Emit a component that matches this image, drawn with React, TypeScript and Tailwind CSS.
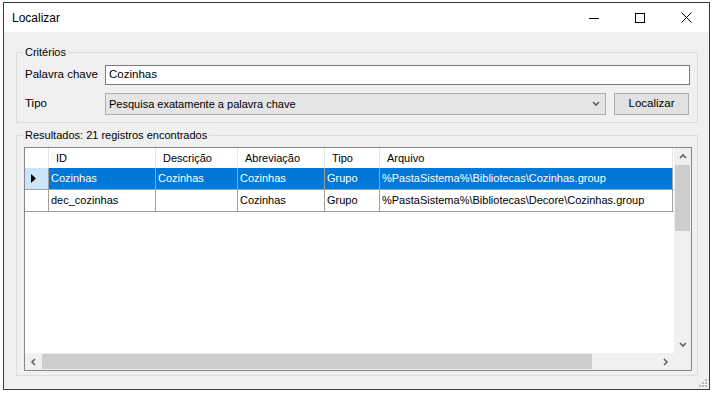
import React from "react";

const font = { fontFamily: '"Liberation Sans", Arial, sans-serif' };

function Chevron({ dir }: { dir: "up" | "down" | "left" | "right" }) {
  const paths: Record<string, string> = {
    up: "M1 5 L4 2 L7 5",
    down: "M1 2 L4 5 L7 2",
    left: "M5 1 L2 4 L5 7",
    right: "M2 1 L5 4 L2 7",
  };
  return (
    <svg width="8" height="8" viewBox="0 0 8 8">
      <path d={paths[dir]} fill="none" stroke="#606060" strokeWidth="1.6" />
    </svg>
  );
}

const cols = [
  { key: "id", label: "ID", w: "w-[107px]" },
  { key: "desc", label: "Descrição", w: "w-[82px]" },
  { key: "abrev", label: "Abreviação", w: "w-[87px]" },
  { key: "tipo", label: "Tipo", w: "w-[55px]" },
  { key: "arq", label: "Arquivo", w: "w-[293px]" },
];

const rows = [
  {
    id: "Cozinhas",
    desc: "Cozinhas",
    abrev: "Cozinhas",
    tipo: "Grupo",
    arq: "%PastaSistema%\\Bibliotecas\\Cozinhas.group",
    sel: true,
  },
  {
    id: "dec_cozinhas",
    desc: "",
    abrev: "Cozinhas",
    tipo: "Grupo",
    arq: "%PastaSistema%\\Bibliotecas\\Decore\\Cozinhas.group",
    sel: false,
  },
];

export default function App() {
  return (
    <div className="w-[714px] h-[394px] bg-white pt-[2px] pl-[3px] text-[11.5px] text-black" style={font}>
      <div className="relative w-[707px] h-[388px] border border-[#3a3a3a] flex flex-col bg-[#f0f0f0]">
        {/* Title bar */}
        <div className="h-[29px] bg-white flex items-center shrink-0">
          <div className="pl-[8px] flex-1 text-[12px] pt-[1px]">Localizar</div>
          <div className="flex h-full">
            <div className="w-[46px] h-full flex items-center justify-center">
              <svg width="10" height="10" viewBox="0 0 10 10">
                <line x1="0" y1="5.5" x2="10" y2="5.5" stroke="#000" strokeWidth="1" />
              </svg>
            </div>
            <div className="w-[46px] h-full flex items-center justify-center">
              <svg width="10" height="10" viewBox="0 0 10 10">
                <rect x="0.5" y="0.5" width="9" height="9" fill="none" stroke="#000" strokeWidth="1" />
              </svg>
            </div>
            <div className="w-[46px] h-full flex items-center justify-center">
              <svg width="11" height="11" viewBox="0 0 11 11">
                <line x1="0.5" y1="0.5" x2="10.5" y2="10.5" stroke="#000" strokeWidth="1" />
                <line x1="10.5" y1="0.5" x2="0.5" y2="10.5" stroke="#000" strokeWidth="1" />
              </svg>
            </div>
          </div>
        </div>

        {/* Client */}
        <div className="flex-1 flex flex-col pl-[12px] pr-[11px] pt-[13px]">
          {/* Critérios */}
          <fieldset className="border border-[#dcdcdc] px-[8px] pt-[5px] pb-[7px] min-w-0">
            <legend className="ml-[-2px] px-[2px] leading-[15px] text-[11px]">Critérios</legend>
            <div className="flex items-center h-[20px]">
              <div className="w-[80px] shrink-0">Palavra chave</div>
              <div className="flex-1 h-[20px] border border-[#7a7a7a] bg-white flex items-center px-[3px] mr-[-1px]">
                Cozinhas
              </div>
            </div>
            <div className="flex items-center h-[22px] mt-[8px]">
              <div className="w-[80px] shrink-0">Tipo</div>
              <div className="flex-1 h-[22px] border border-[#adadad] bg-[#e5e5e5] flex items-center pl-[3px] pr-[5px] text-[11px]">
                <span className="flex-1">Pesquisa exatamente a palavra chave</span>
                <Chevron dir="down" />
              </div>
              <div className="w-[75px] h-[22px] ml-[8px] border border-[#adadad] bg-[#e1e1e1] flex items-center justify-center">
                Localizar
              </div>
            </div>
          </fieldset>

          {/* Resultados */}
          <fieldset className="mt-[5px] border border-[#dcdcdc] pl-[7px] pr-[5px] pt-[4px] pb-[4px] min-w-0">
            <legend className="ml-[-1px] px-[2px] leading-[15px] text-[11px]">Resultados: 21 registros encontrados</legend>
            <div className="h-[224px] border border-[#828790] bg-white flex flex-col text-[11px]">
              <div className="flex flex-1 min-h-0">
                {/* data area */}
                <div className="flex-1 flex flex-col">
                  {/* header */}
                  <div className="flex h-[20px]">
                    <div className="w-[24px] border-r border-[#e5e5e5]" />
                    {cols.map((c) => (
                      <div
                        key={c.key}
                        className={`${c.w} shrink-0 border-r border-[#e5e5e5] flex items-center pl-[7px]`}
                      >
                        {c.label}
                      </div>
                    ))}
                  </div>
                  {rows.map((r, i) => (
                    <div key={i} className="flex h-[22px] border-b border-[#a0a0a0]">
                      <div
                        className={`w-[24px] shrink-0 border-r border-[#a0a0a0] flex items-center pl-[6px] ${
                          r.sel ? "bg-[#cce4f7]" : "bg-white"
                        }`}
                      >
                        {r.sel && (
                          <svg width="5" height="9" viewBox="0 0 5 9">
                            <path d="M0 0 L5 4.5 L0 9 Z" fill="#000" />
                          </svg>
                        )}
                      </div>
                      {cols.map((c) => (
                        <div
                          key={c.key}
                          className={`${c.w} shrink-0 border-r border-[#a0a0a0] flex items-center pl-[2px] whitespace-nowrap overflow-hidden ${
                            r.sel ? "bg-[#0078d7] text-white" : "bg-white text-black"
                          }`}
                        >
                          {(r as any)[c.key]}
                        </div>
                      ))}
                    </div>
                  ))}
                </div>
                {/* vertical scrollbar */}
                <div className="w-[17px] bg-[#f0f0f0] flex flex-col">
                  <div className="h-[17px] flex items-center justify-center">
                    <Chevron dir="up" />
                  </div>
                  <div className="h-[66px] mx-[1px] bg-[#cdcdcd]" />
                  <div className="flex-1" />
                  <div className="h-[17px] flex items-center justify-center">
                    <Chevron dir="down" />
                  </div>
                </div>
              </div>
              {/* horizontal scrollbar */}
              <div className="h-[17px] flex">
                <div className="flex-1 bg-[#f0f0f0] flex">
                  <div className="w-[17px] flex items-center justify-center">
                    <Chevron dir="left" />
                  </div>
                  <div className="w-[550px] my-[1px] bg-[#cdcdcd]" />
                  <div className="flex-1" />
                  <div className="w-[17px] flex items-center justify-center">
                    <Chevron dir="right" />
                  </div>
                </div>
                <div className="w-[17px] bg-[#f0f0f0]" />
              </div>
            </div>
          </fieldset>
        </div>

        {/* size grip */}
        <div className="absolute right-[2px] bottom-[2px] w-[8px] h-[8px]">
          <div className="absolute right-0 top-0 w-[2px] h-[2px] bg-[#b8b8b8]" />
          <div className="absolute right-0 top-[3px] w-[2px] h-[2px] bg-[#b8b8b8]" />
          <div className="absolute right-[3px] top-[3px] w-[2px] h-[2px] bg-[#b8b8b8]" />
          <div className="absolute right-0 top-[6px] w-[2px] h-[2px] bg-[#b8b8b8]" />
          <div className="absolute right-[3px] top-[6px] w-[2px] h-[2px] bg-[#b8b8b8]" />
          <div className="absolute right-[6px] top-[6px] w-[2px] h-[2px] bg-[#b8b8b8]" />
        </div>
      </div>
    </div>
  );
}
